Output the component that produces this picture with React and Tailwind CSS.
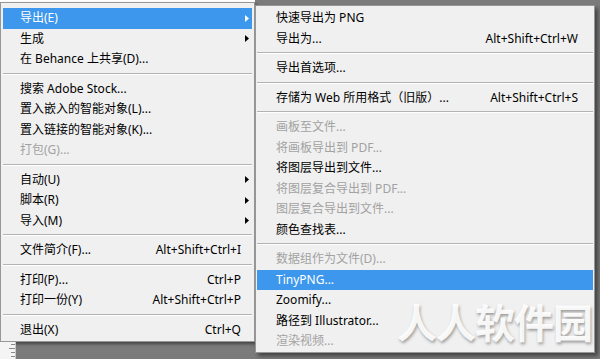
import React from 'react';

const FONT = { fontFamily: '"Noto Sans", "Noto Sans CJK SC", sans-serif' };

const mainItems = [
  { label: '导出(E)', arrow: true, active: true },
  { label: '生成', arrow: true },
  { label: '在 Behance 上共享(D)...' },
  { sep: true },
  { label: '搜索 Adobe Stock...' },
  { label: '置入嵌入的智能对象(L)...' },
  { label: '置入链接的智能对象(K)...' },
  { label: '打包(G)...', disabled: true },
  { sep: true },
  { label: '自动(U)', arrow: true },
  { label: '脚本(R)', arrow: true },
  { label: '导入(M)', arrow: true },
  { sep: true },
  { label: '文件简介(F)...', key: 'Alt+Shift+Ctrl+I' },
  { sep: true },
  { label: '打印(P)...', key: 'Ctrl+P' },
  { label: '打印一份(Y)', key: 'Alt+Shift+Ctrl+P' },
  { sep: true },
  { label: '退出(X)', key: 'Ctrl+Q' },
];

const subItems = [
  { label: '快速导出为 PNG' },
  { label: '导出为...', key: 'Alt+Shift+Ctrl+W' },
  { sep: true },
  { label: '导出首选项...' },
  { sep: true },
  { label: '存储为 Web 所用格式（旧版）...', key: 'Alt+Shift+Ctrl+S' },
  { sep: true },
  { label: '画板至文件...', disabled: true },
  { label: '将画板导出到 PDF...', disabled: true },
  { label: '将图层导出到文件...' },
  { label: '将图层复合导出到 PDF...', disabled: true },
  { label: '图层复合导出到文件...', disabled: true },
  { label: '颜色查找表...' },
  { sep: true },
  { label: '数据组作为文件(D)...', disabled: true },
  { label: 'TinyPNG...', active: true },
  { label: 'Zoomify...' },
  { label: '路径到 Illustrator...' },
  { label: '渲染视频...', disabled: true },
];

const Arrow = ({ white }) => (
  <svg width="4" height="7" viewBox="0 0 4 7" className="shrink-0">
    <path d="M0 0 L4 3.5 L0 7 Z" fill={white ? '#ffffff' : '#000000'} />
  </svg>
);

const Sep = () => (
  <div className="h-[9px] pt-[3px]">
    <div className="h-px bg-[#b3b3b3]" />
    <div className="h-px bg-white" />
  </div>
);

function Row({ item, sub }) {
  const color = item.active ? 'text-white bg-[#3c97ed]' : item.disabled ? 'text-[#a2a2a2]' : 'text-black';
  const pad = sub ? 'pl-[19px] pr-[15px]' : item.arrow ? 'pl-[17px] pr-[3px]' : 'pl-[17px] pr-[11px]';
  return (
    <div className={`h-[20.5px] flex items-center text-[12px] whitespace-nowrap ${color} ${pad}`}>
      <span>{item.label}</span>
      <span className="flex-1" />
      {item.key && <span>{item.key}</span>}
      {item.arrow && <Arrow white={item.active} />}
    </div>
  );
}

export default function App() {
  return (
    <div className="relative w-[600px] h-[359px] overflow-hidden bg-[#7b7b7b] flex" style={FONT}>
      {/* main menu column */}
      <div className="flex flex-col w-[255px]">
        <div className="h-[2px] bg-white" />
        <div className="bg-[#f0f0f0] border border-[#979797] pt-[5px] pb-px px-[2px] shadow-[2px_2px_3px_rgba(0,0,0,0.45)]">
          {mainItems.map((it, i) => (it.sep ? <Sep key={i} /> : <Row key={i} item={it} />))}
        </div>
        <div className="flex-1 flex">
          <div className="w-[16px] bg-[#f4f4f4] flex flex-col items-end pt-[2px] gap-[3px] border-r border-[#c8c8c8]">
            <div className="w-[4px] h-px bg-[#8a8a8a]" />
            <div className="w-[6px] h-px bg-[#8a8a8a]" />
            <div className="w-[4px] h-px bg-[#8a8a8a]" />
            <div className="w-[4px] h-px bg-[#8a8a8a]" />
          </div>
        </div>
      </div>

      {/* export submenu */}
      <div className="pt-[5px]">
        <div className="w-[340px] bg-[#f0f0f0] border border-[#979797] pt-[2px] px-px shadow-[3px_3px_4px_rgba(0,0,0,0.45)]">
          {subItems.map((it, i) => (it.sep ? <Sep key={i} /> : <Row key={i} item={it} sub />))}
        </div>
      </div>

      {/* watermark */}
      <div
        className="absolute left-[397px] top-[301px] text-[40px] leading-none font-bold text-white/90 tracking-[-1px]"
        style={{ fontFamily: '"Noto Sans CJK SC", sans-serif', textShadow: '1px 2px 3px rgba(0,0,0,0.35)' }}
      >
        人人软件园
      </div>
    </div>
  );
}
